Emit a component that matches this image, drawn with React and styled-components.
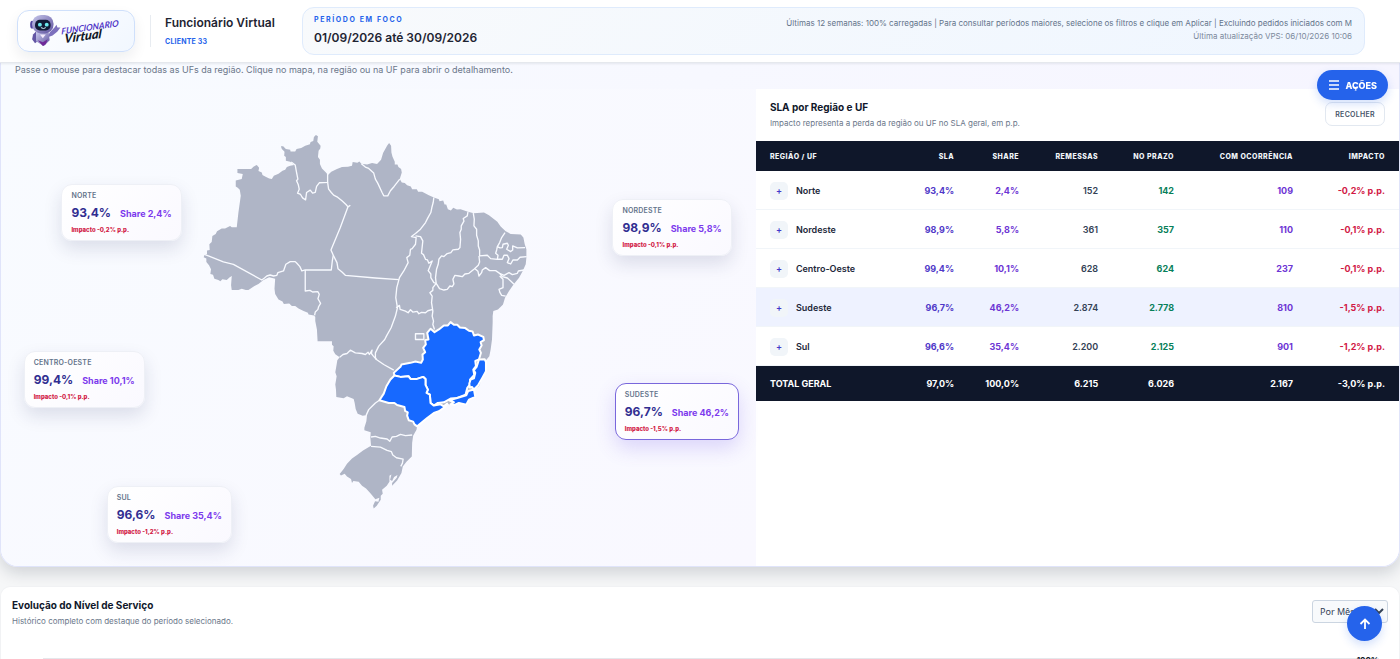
import { useState } from "react";
import styled, { createGlobalStyle, css } from "styled-components";

const REGIONS = [
  { id: "norte", name: "Norte", sla: "93,4%", share: "2,4%", remessas: "152", prazo: "142", ocorrencia: "109", impacto: "-0,2%", left: "8%", top: "20%" },
  { id: "nordeste", name: "Nordeste", sla: "98,9%", share: "5,8%", remessas: "361", prazo: "357", ocorrencia: "110", impacto: "-0,1%", left: "81%", top: "23%" },
  { id: "centro", name: "Centro-Oeste", sla: "99,4%", share: "10,1%", remessas: "628", prazo: "624", ocorrencia: "237", impacto: "-0,1%", left: "3%", top: "55%" },
  { id: "sudeste", name: "Sudeste", sla: "96,7%", share: "46,2%", remessas: "2.874", prazo: "2.778", ocorrencia: "810", impacto: "-1,5%", left: "81.3%", top: "61.7%" },
  { id: "sul", name: "Sul", sla: "96,6%", share: "35,4%", remessas: "2.200", prazo: "2.125", ocorrencia: "901", impacto: "-1,2%", left: "14%", top: "83.2%" },
];

const COUNTRY =
  "M257 52L264 52 272 60 285 62 286 67 300 67 304 60 318 57 330 50 344 46 346 39 354 36 356 24 362 18 368 22 366 38 376 50 375 58 370 65 368 84 374 92 374 105 380 118 392 130 398 138 408 128 425 120 440 114 458 113 470 110 472 99 486 101 492 97 498 104 515 106 530 102 545 105 557 92 563 72 575 50 581 42 587 50 588 70 591 82 598 98 598 106 606 106 609 114 617 120 619 130 613 150 619 160 628 162 635 168 646 172 650 180 664 180 668 188 680 188 700 198 715 205 730 210 732 216 743 214 747 226 752 226 757 240 766 244 773 236 784 241 795 240 817 248 835 252 865 250 880 258 905 278 915 292 930 306 945 314 975 316 983 325 987 345 992 360 992 385 990 405 981 425 970 445 953 466 940 485 928 505 922 525 907 540 893 545 891 560 891 580 889 630 885 660 881 680 871 692 871 725 860 745 850 770 835 780 839 802 820 808 812 825 790 820 780 826 765 826 755 822 740 838 715 850 695 865 665 890 663 900 653 918 650 940 649 980 633 996 622 1010 618 1030 605 1052 590 1068 590 1060 604 1044 606 1036 596 1042 590 1054 584 1050 588 1034 582 1038 582 1056 574 1068 560 1080 562 1092 556 1098 556 1110 544 1128 535 1136 533 1128 539 1114 549 1116 552 1104 540 1108 525 1090 512 1076 500 1068 490 1056 474 1054 470 1060 467 1048 455 1040 448 1032 437 1037 433 1033 445 1018 455 1002 470 986 485 976 503 962 527 948 525 925 526 908 507 902 507 894 513 875 515 856 502 858 487 852 481 838 478 820 475 808 455 800 445 806 423 802 422 780 420 765 424 740 420 728 424 705 426 692 433 683 420 674 414 664 415 650 410 646 410 635 367 635 365 600 360 575 360 562 356 558 340 555 338 550 325 545 310 537 300 530 290 530 282 522 266 524 262 516 250 510 240 494 238 478 240 448 222 444 205 452 190 464 178 470 160 482 152 482 140 478 130 482 110 482 108 468 110 440 104 444 95 452 82 450 76 456 70 452 58 448 54 436 46 434 48 420 42 408 34 398 34 388 26 384 28 378 36 374 36 364 44 362 43 345 50 338 52 320 62 314 66 306 80 298 90 298 105 290 110 294 125 294 130 250 137 200 134 182 128 176 122 172 122 154 140 150 143 135 127 132 127 120 168 120 176 112 185 108 192 116 190 126 200 130 202 138 210 142 222 148 230 150 236 140 250 134 262 125 270 122 275 114 285 110 297 108 285 98 272 95 272 84 267 80 268 68 260 60Z";

const STATE_BORDERS = [
  "M288 99L300 108 304 130 308 150 304 155 309 166 312 180 307 192 316 196 322 206 331 212 334 190 345 183 352 192 360 190 364 172 372 161 397 160 397 135",
  "M397 160L400 180 408 190 415 198 425 203 440 215 452 226 458 233 465 228M458 233L435 295 407 362 414 378 411 395 408 422 330 422 320 425 314 412 305 402 300 397 285 397 272 405 265 425 248 430 245 438 235 440 225 437 215 440 208 446 200 452 115 405 85 398 40 380 30 376",
  "M414 378L425 400 428 418 440 428 450 438 540 446 610 451",
  "M330 422L330 485 344 483 352 488 368 487 372 495 368 508 376 522 370 532 368 540 360 548 358 558",
  "M498 104L510 114 520 118 535 132 540 150 547 162 560 190 565 200 577 200 585 185 596 172 613 150",
  "M715 205L713 220 709 235 706 250 697 266 690 280 675 300 660 313 648 322 662 325 660 345 650 358 645 360 643 378 634 385 638 400 625 425 612 445 604 475 601 505 606 535 600 560 587 595 573 620 568 630 550 650 540 670 540 684 543 690 565 705 595 722",
  "M660 320L675 322 682 335 678 372 684 376 690 390 696 392 700 402 710 395 703 412 698 424 706 434 706 445 715 460 722 462",
  "M817 248L815 260 803 268 805 276 797 290 797 300 793 310 795 330 793 355 788 360 772 362 766 370 755 373 745 382 738 380 730 390 728 405 723 420 720 445 722 462 732 478 745 482 755 480 763 470 770 472 775 464 772 450 778 438 790 440 800 442 808 434 820 432 835 420 848 408 852 398 850 380",
  "M833 252L836 270 835 290 843 300 843 318 848 335 848 350 852 362 852 380 875 378 885 388 905 390 907 378 900 372 903 362 905 352 912 340 918 325 928 310",
  "M905 352L913 356 920 355 922 345 935 342 938 348 933 360 945 367 951 362 951 350 965 356 988 355",
  "M905 390L920 390 925 378 935 378 940 388 935 400 945 404 952 392 965 392 973 384 993 382",
  "M838 418L847 426 850 440 858 430 860 422 870 415 882 424 900 424 912 432 925 438 940 430 950 436 965 432 968 425 985 422",
  "M912 432L920 442 935 446 945 455 955 465M912 440L922 450 922 475 910 480 913 490 918 498 930 500",
  "M722 462L712 475 712 483 703 490 710 500 708 520 712 545 710 560 714 575 712 585 717 600",
  "M602 535L612 528 614 540 630 545 638 550 645 541 652 548 665 546 670 553 678 549 690 550 697 544 712 540",
  "M433 683L443 675 455 672 465 662 480 670 500 672 510 675 518 668 522 675 530 662 528 672 534 680 543 690",
  "M552 812L540 820 530 830 520 840 512 858",
  "M527 922L540 920 555 925 575 928 583 935 590 922 603 920 615 914 630 918 650 916",
  "M527 950L555 952 575 962 588 966 592 976 603 984 623 988 621 1000 616 1010",
  "M660 613H685V630H660Z",
];

const SOUTHEAST = [
  "M282 198L280 190 300 172 303 165 330 160 345 156 362 160 367 150 366 135 374 128 368 115 376 105 374 92 384 90 380 70 390 58 402 68 415 60 430 48 442 48 450 38 460 46 470 46 478 54 494 56 505 64 516 66 520 78 532 75 548 82 550 92 540 98 543 108 536 120 541 130 535 150 524 154 526 170 518 180 521 196 508 210 510 222 500 235 495 255 470 265 450 267 430 278 412 280 400 288 390 280 388 255 378 250 382 240 375 226 375 208 368 202 350 208 330 208 324 200 300 202Z",
  "M535 150L552 149 556 158 556 185 545 205 532 228 520 240 514 232 508 234 506 222 510 210 520 206 524 190 520 182 528 172Z",
  "M497 257L503 244 520 240 524 262 505 270 497 285 475 280 462 286 450 284 460 278 446 272 470 265Z",
  "M282 198L300 202 324 200 330 208 350 208 368 202 375 208 375 226 382 240 378 250 388 255 390 280 400 288 420 284 430 290 440 282 432 293 415 305 400 310 380 325 350 350 342 344 338 336 325 332 320 318 322 308 314 304 312 292 290 286 282 280 265 280 237 272 250 252 258 230 270 210Z",
];

function BrandMark() {
  return (
    <BrandDrawing viewBox="0 0 118 41" role="img" aria-label="Funcionário Virtual">
      <defs>
        <linearGradient id="robot" x1="0" y1="0" x2="1" y2="1">
          <stop offset="0" stopColor="#c8c9ec" />
          <stop offset="1" stopColor="#5b4e9c" />
        </linearGradient>
      </defs>
      <g transform="translate(-2 -1)">
        <path d="M34 23 39 18 41 15 42 18 45 18 42 22 37 26 32 28Z" fill="#7c70bd" />
        <path d="M17 25 20 22 23 31 19 34 16 30Z" fill="#6356a4" />
        <ellipse cx="16" cy="15" rx="2" ry="4" fill="#5145a0" />
        <path d="M20 23H33L34 31 28 37 20 32Z" fill="url(#robot)" />
        <path d="M22 31 27 33 32 30 30 35 27 37Z" fill="#702a98" />
        <path d="M24 25H30L27 29Z" fill="#f3eafc" />
        <rect x="16" y="5" width="22" height="19" rx="9" fill="url(#robot)" />
        <rect x="19" y="10" width="16" height="11" rx="5" fill="#111b35" />
        <circle cx="24" cy="15" r="2" fill="#6ce9ee" />
        <circle cx="31" cy="15" r="2" fill="#6ce9ee" />
        <path d="M25 18Q28 20 30 18" fill="none" stroke="#d5f7ff" />
      </g>
      <BrandWord fill="#5136c7" transform="translate(44 24) rotate(-8) skewX(-10)">
        FUNCIONARIO
      </BrandWord>
      <BrandScript fill="#111827" transform="translate(47 33) rotate(-8) skewX(-12)">
        Virtual
      </BrandScript>
    </BrandDrawing>
  );
}

function BrazilMap() {
  return (
    <MapDrawing viewBox="18 0 1062 1155" role="img" aria-label="Mapa do Brasil por UF">
      <path d={COUNTRY} fill="#afb5c6" />
      <g fill="none" stroke="#f8faff" strokeWidth="4" strokeLinejoin="round">
        {STATE_BORDERS.map((d) => (
          <path key={d} d={d} />
        ))}
      </g>
      <g transform="translate(315 540)" fill="#1769ff" stroke="#ffffff" strokeWidth="6" strokeLinejoin="round">
        {SOUTHEAST.map((d) => (
          <path key={d} d={d} />
        ))}
      </g>
    </MapDrawing>
  );
}

function Header() {
  return (
    <HeaderBar>
      <BrandLink href="#inicio">
        <BrandMark />
      </BrandLink>
      <Identity>
        <AppTitle>Funcionário Virtual</AppTitle>
        <Client>CLIENTE 33</Client>
      </Identity>
      <FocusPanel>
        <div>
          <FocusLabel>PERÍODO EM FOCO</FocusLabel>
          <FocusDate>01/09/2026 até 30/09/2026</FocusDate>
        </div>
        <FocusNotes>
          <p>
            Últimas 12 semanas: 100% carregadas | Para consultar períodos maiores, selecione os filtros e clique em Aplicar | Excluindo pedidos iniciados com M
          </p>
          <Updated>Última atualização VPS: 06/10/2026 10:06</Updated>
        </FocusNotes>
      </FocusPanel>
    </HeaderBar>
  );
}

function SlaTable({ active, onSelect }) {
  return (
    <Table>
      <colgroup>
        <Col $width="22.7%" />
        <Col $width="10.3%" />
        <Col $width="10.1%" />
        <Col $width="12.3%" />
        <Col $width="11.8%" />
        <Col $width="18.5%" />
        <Col $width="14.3%" />
      </colgroup>
      <thead>
        <tr>
          {["REGIÃO / UF", "SLA", "SHARE", "REMESSAS", "NO PRAZO", "COM OCORRÊNCIA", "IMPACTO"].map((label) => (
            <HeadCell key={label} scope="col">
              {label}
            </HeadCell>
          ))}
        </tr>
      </thead>
      <tbody>
        {REGIONS.map((r) => (
          <Row key={r.id} $active={active === r.id} onMouseEnter={() => onSelect(r.id)}>
            <NameCell scope="row">
              <RegionName>
                <Expand type="button" aria-label={`Abrir ${r.name}`}>
                  +
                </Expand>
                {r.name}
              </RegionName>
            </NameCell>
            <Cell $color="#4f38c8">{r.sla}</Cell>
            <Cell $color="#6d35d4">{r.share}</Cell>
            <Cell $color="#334155" $weight={600}>{r.remessas}</Cell>
            <Cell $color="#07805a">{r.prazo}</Cell>
            <Cell $color="#6d35d4">{r.ocorrencia}</Cell>
            <Cell $color="#d11845">{r.impacto} p.p.</Cell>
          </Row>
        ))}
      </tbody>
      <tfoot>
        <tr>
          <TotalCell>TOTAL GERAL</TotalCell>
          <TotalCell>97,0%</TotalCell>
          <TotalCell>100,0%</TotalCell>
          <TotalCell>6.215</TotalCell>
          <TotalCell>6.026</TotalCell>
          <TotalCell>2.167</TotalCell>
          <TotalCell>-3,0% p.p.</TotalCell>
        </tr>
      </tfoot>
    </Table>
  );
}

export default function App() {
  const [active, setActive] = useState("sudeste");

  return (
    <Page>
      <GlobalStyle />
      <Header />
      <SlaSection>
        <Hint>
          Passe o mouse para destacar todas as UFs da região. Clique no mapa, na região ou na UF para abrir o detalhamento.
        </Hint>
        <SlaGrid>
          <MapPanel>
            <BrazilMap />
            {REGIONS.map((r) => (
              <RegionCard
                key={r.id}
                type="button"
                $left={r.left}
                $top={r.top}
                $active={active === r.id}
                onClick={() => setActive(r.id)}
              >
                <CardName>{r.name}</CardName>
                <CardValues>
                  <CardSla>{r.sla}</CardSla>
                  <CardShare>Share {r.share}</CardShare>
                </CardValues>
                <CardImpact>Impacto {r.impacto} p.p.</CardImpact>
              </RegionCard>
            ))}
          </MapPanel>
          <TablePanel>
            <PanelHead>
              <div>
                <PanelTitle>SLA por Região e UF</PanelTitle>
                <PanelText>Impacto representa a perda da região ou UF no SLA geral, em p.p.</PanelText>
              </div>
              <Collapse type="button">RECOLHER</Collapse>
            </PanelHead>
            <SlaTable active={active} onSelect={setActive} />
          </TablePanel>
        </SlaGrid>
      </SlaSection>
      <TrendSection>
        <TrendHead>
          <div>
            <PanelTitle>Evolução do Nível de Serviço</PanelTitle>
            <PanelText>Histórico completo com destaque do período selecionado.</PanelText>
          </div>
          <PeriodSelect aria-label="Agrupamento" defaultValue="mes">
            <option value="mes">Por Mês</option>
            <option value="semana">Por Semana</option>
          </PeriodSelect>
        </TrendHead>
        <Chart>
          <ChartLabel>100%</ChartLabel>
        </Chart>
      </TrendSection>
      <ActionsButton type="button">
        <svg width="12" height="12" viewBox="0 0 12 12" aria-hidden="true">
          <path d="M1 2H11M1 6H11M1 10H11" stroke="currentColor" strokeWidth="1.3" />
        </svg>
        AÇÕES
      </ActionsButton>
      <TopButton type="button" aria-label="Voltar ao topo">
        <svg width="12" height="12" viewBox="0 0 12 12" aria-hidden="true">
          <path d="M6 11V1.500M1.500 6 6 1.500 10.500 6" fill="none" stroke="currentColor" strokeWidth="1.800" />
        </svg>
      </TopButton>
    </Page>
  );
}

const GlobalStyle = createGlobalStyle`
  * {
    box-sizing: border-box;
  }
  body {
    margin: 0;
    background: #f6f7f8;
    color: #0f172a;
    font-family: Inter, "Liberation Sans", sans-serif;
  }
  p, h1, h2 {
    margin: 0;
  }
  button, select {
    font-family: inherit;
    cursor: pointer;
  }
`;

const Page = styled.div`
  height: 100vh;
  display: flex;
  flex-direction: column;
  overflow: hidden;
`;

const HeaderBar = styled.header`
  position: relative;
  z-index: 2;
  flex: none;
  display: flex;
  align-items: center;
  padding: 7px 35px 7px 17px;
  background: #ffffff;
  border-bottom: 1px solid #e5e8ed;
  box-shadow: 0 1px 2px rgba(15, 23, 42, 0.08);
`;

const BrandLink = styled.a`
  width: 118px;
  height: 42px;
  flex: none;
  border: 1px solid #cfe0fb;
  border-radius: 12px;
  background: linear-gradient(135deg, #ffffff, #f1f7ff);
  box-shadow: 0 6px 14px rgba(15, 23, 42, 0.07);
`;

const BrandDrawing = styled.svg`
  display: block;
  width: 100%;
  height: 100%;
`;

const BrandWord = styled.text`
  font: italic 700 9px Lato, sans-serif;
`;

const BrandScript = styled.text`
  font: italic 900 13px Lato, sans-serif;
`;

const Identity = styled.div`
  width: 152px;
  flex: none;
  margin-left: 15px;
  padding-left: 14px;
  border-left: 1px solid #e8ecf1;
`;

const AppTitle = styled.h1`
  font-size: 12px;
  line-height: 16px;
  font-weight: 600;
  color: #1e2432;
`;

const Client = styled.p`
  margin-top: 6px;
  font-size: 7px;
  line-height: 10px;
  font-weight: 700;
  color: #2563eb;
  letter-spacing: 0.2px;
`;

const FocusPanel = styled.section`
  flex: 1;
  min-width: 0;
  min-height: 48px;
  display: flex;
  align-items: center;
  justify-content: space-between;
  padding: 5px 12px 7px 11px;
  border: 1px solid #dfebfc;
  border-radius: 12px;
  background: linear-gradient(135deg, #f8fafc, #eff6ff);
`;

const FocusLabel = styled.p`
  font-size: 7px;
  line-height: 12px;
  font-weight: 700;
  color: #2563eb;
  letter-spacing: 1.6px;
`;

const FocusDate = styled.p`
  margin-top: 3px;
  font-size: 12px;
  line-height: 18px;
  font-weight: 600;
  color: #1e2432;
`;

const FocusNotes = styled.div`
  text-align: right;
  font-size: 8px;
  line-height: 13px;
  color: #64748b;
`;

const Updated = styled.p`
  color: #7c899c;
`;

const SlaSection = styled.section`
  flex: none;
  border: 1px solid #e0e4fa;
  border-top: 0;
  border-radius: 0 0 18px 18px;
  overflow: hidden;
  background: linear-gradient(90deg, #f8fbff, #f6f5ff);
  box-shadow: 0 6px 16px rgba(15, 23, 42, 0.16);
`;

const Hint = styled.p`
  padding: 0 14px 12px;
  font-size: 9px;
  line-height: 14px;
  color: #6b778a;
`;

const SlaGrid = styled.div`
  display: grid;
  grid-template-columns: 54% 46%;
`;

const MapPanel = styled.div`
  position: relative;
  display: flex;
  justify-content: center;
  padding: 40px 0 51px;
  background: linear-gradient(135deg, #f8fbff, #f9f8ff);
`;

const MapDrawing = styled.svg`
  width: 47%;
  height: auto;
`;

const RegionCard = styled.button`
  position: absolute;
  left: ${({ $left }) => $left};
  top: ${({ $top }) => $top};
  display: grid;
  padding: 6px 9px;
  text-align: left;
  border: 1px solid #eef0f6;
  border-radius: 11px;
  background: linear-gradient(135deg, #ffffff, #faf9ff);
  box-shadow: 0 8px 18px rgba(30, 41, 89, 0.13);
  ${({ $active }) =>
    $active &&
    css`
      border-color: #7967dc;
      box-shadow: 0 8px 20px rgba(99, 70, 229, 0.2);
    `}
`;

const CardName = styled.span`
  font-size: 7px;
  line-height: 10px;
  font-weight: 600;
  letter-spacing: 0.2px;
  text-transform: uppercase;
  color: #64748b;
`;

const CardValues = styled.span`
  display: flex;
  align-items: baseline;
  gap: 9px;
  padding: 3px 0;
`;

const CardSla = styled.strong`
  font-size: 12px;
  line-height: 18px;
  font-weight: 700;
  color: #312e91;
`;

const CardShare = styled.span`
  font-size: 9px;
  line-height: 14px;
  font-weight: 700;
  color: #7c3aed;
`;

const CardImpact = styled.span`
  font-size: 6px;
  line-height: 9px;
  font-weight: 800;
  color: #d11845;
`;

const TablePanel = styled.div`
  background: #ffffff;
`;

const PanelHead = styled.div`
  display: flex;
  justify-content: space-between;
  align-items: flex-start;
  padding: 10px 14px 11px;
`;

const PanelTitle = styled.h2`
  font-size: 10px;
  line-height: 16px;
  font-weight: 700;
  color: #0f172a;
`;

const PanelText = styled.p`
  margin-top: 2px;
  font-size: 8px;
  line-height: 13px;
  color: #6b778a;
`;

const Collapse = styled.button`
  margin-top: 3px;
  height: 24px;
  padding: 0 9px;
  border: 1px solid #e2e8f0;
  border-radius: 7px;
  background: #ffffff;
  font-size: 7px;
  font-weight: 600;
  letter-spacing: 0.3px;
  color: #475569;
`;

const Table = styled.table`
  width: 100%;
  table-layout: fixed;
  border-collapse: collapse;
  font-size: 9px;
`;

const Col = styled.col`
  width: ${({ $width }) => $width};
`;

const HeadCell = styled.th`
  height: 30px;
  padding: 0 14px;
  background: #0f172a;
  color: #f1f5f9;
  font-size: 7px;
  font-weight: 800;
  letter-spacing: 0.5px;
  text-align: right;
  white-space: nowrap;
  &:first-child {
    text-align: left;
  }
`;

const Row = styled.tr`
  background: ${({ $active }) => ($active ? "#eef2ff" : "#ffffff")};
  box-shadow: inset 0 -1px #f1f5f9;
`;

const NameCell = styled.th`
  height: 39px;
  padding: 0 14px;
  text-align: left;
  font-weight: 600;
  color: #1e293b;
`;

const RegionName = styled.div`
  display: flex;
  align-items: center;
  gap: 8px;
`;

const Expand = styled.button`
  width: 18px;
  height: 18px;
  padding: 0;
  border: 0;
  border-radius: 5px;
  background: #f1f5f9;
  font-size: 9px;
  font-weight: 600;
  color: #4338ca;
`;

const Cell = styled.td`
  padding: 0 14px;
  text-align: right;
  font-weight: ${({ $weight = 700 }) => $weight};
  color: ${({ $color }) => $color};
`;

const TotalCell = styled.td`
  height: 35px;
  padding: 0 14px;
  background: #0f172a;
  color: #ffffff;
  font-weight: 700;
  text-align: right;
  &:first-child {
    text-align: left;
  }
`;

const TrendSection = styled.section`
  flex: 1;
  min-height: 0;
  margin-top: 19px;
  border: 1px solid #f1f2f4;
  border-bottom: 0;
  border-radius: 10px 10px 0 0;
  background: #ffffff;
`;

const TrendHead = styled.div`
  display: flex;
  justify-content: space-between;
  align-items: flex-start;
  padding: 10px 11px 0;
`;

const PeriodSelect = styled.select`
  margin-top: 3px;
  width: 76px;
  height: 23px;
  padding: 0 3px;
  border: 1px solid #cbd5e1;
  border-radius: 3px;
  background: #f8fafc;
  font-family: "Noto Sans", sans-serif;
  font-size: 9px;
  color: #334155;
`;

const Chart = styled.div`
  height: 120px;
  margin: 30px 20px 0 42px;
  border-top: 1px solid #e5e7eb;
  text-align: right;
`;

const ChartLabel = styled.p`
  margin-top: -4px;
  font-size: 8px;
  line-height: 10px;
  font-weight: 700;
  color: #111827;
`;

const ActionsButton = styled.button`
  position: fixed;
  z-index: 3;
  top: 70px;
  right: 12px;
  height: 30px;
  display: flex;
  align-items: center;
  gap: 5px;
  padding: 0 11px;
  border: 0;
  border-radius: 15px;
  background: #2563eb;
  box-shadow: 0 4px 10px rgba(37, 99, 235, 0.2);
  color: #ffffff;
  font-size: 9px;
  font-weight: 800;
`;

const TopButton = styled.button`
  position: fixed;
  z-index: 3;
  right: 18px;
  bottom: 18px;
  width: 35px;
  height: 35px;
  display: grid;
  place-items: center;
  padding: 0;
  border: 0;
  border-radius: 50%;
  background: #2563eb;
  box-shadow: 0 4px 10px rgba(37, 99, 235, 0.2);
  color: #ffffff;
`;
